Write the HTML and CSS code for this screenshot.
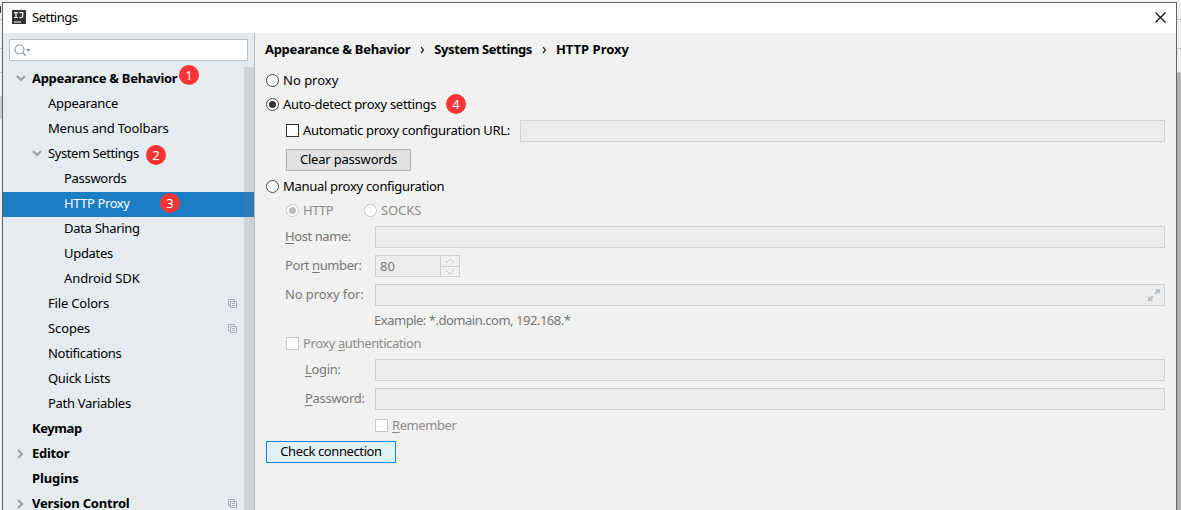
FILE: index.html
```html
<!DOCTYPE html>
<html lang="en">
<head>
<meta charset="utf-8">
<title>Settings</title>
<link rel="stylesheet" href="styles.css">
</head>
<body>
<svg class="defs" width="0" height="0">
  <symbol id="copy" viewBox="0 0 9 9"><path d="M2 6.500H.5V.5h6V2M2.500 2.500h6v6h-6zM4 4.500h3M4 6.500h3" fill="none" stroke="#a3afb8"/></symbol>
  <symbol id="down" viewBox="0 0 10 7"><path d="M1 1l4 4 4-4" fill="none" stroke="#999da0" stroke-width="2"/></symbol>
  <symbol id="right" viewBox="0 0 7 10"><path d="M1 1l4 4-4 4" fill="none" stroke="#999da0" stroke-width="2"/></symbol>
</svg>
<div class="backdrop">
  <div class="edge edge-left"><i class="e1"></i><i class="e2"></i><i class="e3"></i><i class="e4"></i><i class="e5"></i></div>
  <div class="window">
    <header class="titlebar">
      <svg class="logo" width="14" height="14" viewBox="0 0 14 14"><path fill="#343434" d="M0 0h14v14H0z"/><path d="M2 2.600h4M4 2.600v5M2 7.500h4M7.500 2.600h3.200v3.500q0 1.400-1.400 1.400H7.500M2 12h7" fill="none" stroke="#fff" stroke-width="1.200"/></svg>
      <span class="title">Settings</span>
      <svg class="close" width="11" height="11" viewBox="0 0 11 11"><path d="M.5.5l10 10M10.500.5l-10 10" stroke="#111" stroke-width="1.200"/></svg>
    </header>
    <div class="body">
      <aside class="sidebar">
        <div class="search"><svg width="18" height="13" viewBox="0 0 18 13"><circle cx="5.500" cy="5.500" r="4.500" fill="none" stroke="#8f9ba4" stroke-width="1.200"/><path d="M8.700 8.700l3 3" stroke="#8f9ba4" stroke-width="1.600"/><path d="M12 5h4.500l-2.200 3z" fill="#8f9ba4"/></svg></div>
        <div class="tree">
          <div class="item l0"><svg class="arrow" width="10" height="7"><use href="#down"/></svg><span>Appearance &amp; Behavior</span><b class="badge b1">1</b></div>
          <div class="item l1"><span>Appearance</span></div>
          <div class="item l1"><span class="t2">Menus and Toolbars</span></div>
          <div class="item l1"><svg class="arrow" width="10" height="7"><use href="#down"/></svg><span class="t4">System Settings</span><b class="badge b2">2</b></div>
          <div class="item l2"><span>Passwords</span></div>
          <div class="item l2 selected"><span class="t4">HTTP Proxy</span><b class="badge b3">3</b></div>
          <div class="item l2"><span>Data Sharing</span></div>
          <div class="item l2"><span>Updates</span></div>
          <div class="item l2"><span class="t1">Android SDK</span></div>
          <div class="item l1"><span class="t2">File Colors</span><svg class="copy" width="9" height="9"><use href="#copy"/></svg></div>
          <div class="item l1"><span class="t1">Scopes</span><svg class="copy" width="9" height="9"><use href="#copy"/></svg></div>
          <div class="item l1"><span>Notifications</span></div>
          <div class="item l1"><span>Quick Lists</span></div>
          <div class="item l1"><span>Path Variables</span></div>
          <div class="item l0"><span class="t4">Keymap</span></div>
          <div class="item l0"><svg class="arrow closed" width="7" height="10"><use href="#right"/></svg><span>Editor</span></div>
          <div class="item l0"><span class="t1">Plugins</span></div>
          <div class="item l0 last"><svg class="arrow closed" width="7" height="10"><use href="#right"/></svg><span class="t2">Version Control</span><svg class="copy" width="9" height="9"><use href="#copy"/></svg></div>
          <div class="scrollbar"></div>
        </div>
      </aside>
      <main class="panel">
        <div class="row crumbs"><span>Appearance &amp; Behavior</span><svg width="5" height="8" viewBox="0 0 5 8"><path d="M1 1l2.500 3L1 7" fill="none" stroke="#222" stroke-width="1.200"/></svg><span class="t4">System Settings</span><svg width="5" height="8" viewBox="0 0 5 8"><path d="M1 1l2.500 3L1 7" fill="none" stroke="#222" stroke-width="1.200"/></svg><span class="t0">HTTP Proxy</span></div>
        <div class="row g9"><i class="radio"></i><span class="t0">No proxy</span></div>
        <div class="row g2"><i class="radio on"></i><span>Auto-detect proxy settings</span><b class="badge b4">4</b></div>
        <div class="row g4 in1"><i class="check"></i><span class="url">Automatic proxy configuration URL:</span><div class="field"></div></div>
        <div class="row g7 in1"><div class="button clear">Clear passwords</div></div>
        <div class="row g5"><i class="radio"></i><span>Manual proxy configuration</span></div>
        <div class="row g2 in1 off"><i class="radio on"></i><span class="http">HTTP</span><i class="radio"></i><span class="t1">SOCKS</span></div>
        <div class="row g4 in1 dim"><span class="label t4"><u>H</u>ost name:</span><div class="field"></div></div>
        <div class="row g7 in1 dim"><span class="label t4">Port <u>n</u>umber:</span><div class="spinner"><span class="t0">80</span><div class="steps"><svg width="18" height="10" viewBox="0 0 18 10"><path d="M5 7l4-4 4 4" fill="none" stroke="#c4c4c4"/></svg><svg width="18" height="9" viewBox="0 0 18 9"><path d="M5 3l4 4 4-4" fill="none" stroke="#c4c4c4"/></svg></div></div></div>
        <div class="row g7 in1 dim"><span class="label t1">No proxy for:</span><div class="field expand"><svg width="12" height="12" viewBox="0 0 12 12"><path d="M7 0h5v5l-1.700-1.700L8 5.500 6.500 4l2.200-2.300zM5 12H0V7l1.700 1.700L4 6.500 5.500 8l-2.200 2.300z" fill="#b6bec4"/></svg></div></div>
        <div class="row g4 example"><span>Example: *.domain.com, 192.168.*</span></div>
        <div class="row g1 in1 off"><i class="check"></i><span class="t4">Proxy <u>a</u>uthentication</span></div>
        <div class="row g4 in2 dim"><span class="label"><u>L</u>ogin:</span><div class="field"></div></div>
        <div class="row g7 in2 dim"><span class="label"><u>P</u>assword:</span><div class="field"></div></div>
        <div class="row g5 in3 off"><i class="check"></i><span class="t4"><u>R</u>emember</span></div>
        <div class="row g4"><div class="button primary">Check connection</div></div>
      </main>
    </div>
  </div>
  <div class="edge edge-right"><i class="e1"></i><i class="e2"></i><i class="e3"></i><i class="e6"></i></div>
</div>
</body>
</html>
```

FILE: styles.css
```css
* { box-sizing: border-box; }
body { margin: 0; height: 510px; overflow: hidden; background: #f0f0f0; color: #000; font: 13px/22px "Noto Sans", "Open Sans", sans-serif; letter-spacing: -.3px; }
i, b { font-style: normal; }
.defs { position: absolute; }
.backdrop { display: grid; grid-template-columns: 2px 1175px 4px; height: 510px; padding-top: 2px; }
.edge { display: flex; flex-direction: column; overflow: hidden; }
.edge i { flex: none; border-bottom: 1px solid #c8c8c8; }
.e1 { height: 18px; }
.edge-left .e1 { background: linear-gradient(#333, #333) 0 4px / 1px 7px no-repeat; }
.e2 { height: 29px; }
.e3 { height: 24px; }
.e4 { height: 24px; }
.edge .e5 { height: 22px; background: #ccc; border: 0; }
.edge .e6 { height: 440px; background: #b3b3b3; border: 0; }
.window { display: flex; flex-direction: column; height: 520px; background: #f1f1f1; border: 1px solid #626262; }
.titlebar { display: flex; align-items: center; flex: none; height: 30px; padding: 0 10px 0 9px; background: #fff; }
.logo { margin-bottom: 2px; }
.title { margin-left: 6px; padding-bottom: 2px; letter-spacing: -.5px; }
.close { margin-left: auto; margin-bottom: 2px; }
.body { display: flex; flex: 1; }
.sidebar { width: 252px; padding-top: 6px; background: #e5ebef; border-right: 1px solid #b9bcbe; }
.search { display: flex; align-items: center; width: 239px; height: 22px; margin: 0 0 6px 6px; padding-left: 4px; background: #fff; border: 1px solid #bdbdbd; }
.tree { position: relative; }
.item { position: relative; display: flex; align-items: center; height: 25px; padding-right: 17px; white-space: nowrap; }
.item span { line-height: 20px; padding-bottom: 4px; }
.last { height: 21px; margin-top: 1px; }
.last span { padding-bottom: 2px; line-height: 18px; }
.item .copy { margin-bottom: 2px; margin-left: auto; }
.last .copy { margin-bottom: 0; }
.l0 { padding-left: 29px; font-weight: 700; }
.l1 { padding-left: 45px; }
.l2 { padding-left: 61px; }
.selected { background: #1b7dc4; color: #fff; }
.arrow { width: 10px; margin: 0 6px 2px -16px; }
.arrow.closed { width: 7px; margin: 0 8px 2px -15px; }
.last .arrow.closed { margin-bottom: 0; }
.scrollbar { position: absolute; top: 0; right: 0; width: 10px; height: 450px; background: rgba(115, 115, 125, .2); }
.badge { position: absolute; z-index: 1; width: 20px; height: 20px; border-radius: 50%; background: #fa3434; color: #fff; font: 13px/20px "Noto Sans", sans-serif; text-align: center; letter-spacing: 0; }
.b1 { left: 176px; top: -2px; }
.b2 { left: 143px; top: 3px; }
.b3 { left: 157px; top: 1px; }
.b4 { left: 180px; top: 0; }
.panel { flex: 1; padding: 6px 11px 0; }
.row { position: relative; display: flex; align-items: center; height: 22px; white-space: nowrap; }
.row > span { padding-bottom: 2px; }
.t0 { letter-spacing: 0; }
.t1 { letter-spacing: -.1px; }
.t2 { letter-spacing: -.18px; }
.t4 { letter-spacing: -.42px; }
.crumbs { margin-left: -1px; font-weight: 700; }
.crumbs svg { margin: 0 9px 1px 10px; }
.g1 { margin-top: 1px; }
.g2 { margin-top: 2px; }
.g4 { margin-top: 4px; }
.g5 { margin-top: 5px; }
.g7 { margin-top: 7px; }
.g9 { margin-top: 9px; }
.in1 { padding-left: 20px; }
.dim.in1 { padding-left: 19px; }
.in2 { padding-left: 39px; }
.in3 { padding-left: 109px; }
.radio { display: grid; place-items: center; width: 13px; height: 13px; margin: 0 4px 1px 0; background: #fff; border: 1px solid #444; border-radius: 50%; }
.radio.on::after { content: ""; width: 7px; height: 7px; border-radius: 50%; background: #333; }
.check { width: 13px; height: 13px; margin: 0 4px 1px 0; background: #fff; border: 1px solid #333; }
.off { color: #8c8c8c; }
.off .radio, .off .check { border-color: #c5c5c5; }
.off .radio.on::after { background: #bbb; }
.dim, .example { color: #777; }
.url { width: 217px; }
.http { width: 61px; letter-spacing: -.5px; }
.label { width: 90px; }
.in2 .label { width: 70px; }
.field { flex: 1; height: 22px; background: #ececec; border: 1px solid #cfcfcf; }
.expand { display: flex; align-items: center; justify-content: flex-end; padding-right: 4px; }
.button { height: 22px; border: 1px solid #adadad; background: #e1e1e1; text-align: center; line-height: 19px; }
.clear { width: 125px; letter-spacing: -.2px; }
.primary { width: 130px; border-color: #0f83da; background: #e3f1fa; letter-spacing: -.4px; }
.spinner { display: flex; justify-content: space-between; width: 85px; height: 22px; padding-left: 4px; background: #ececec; border: 1px solid #cfcfcf; line-height: 20px; }
.steps { width: 19px; border-left: 1px solid #cfcfcf; background: #f0f0f0; }
.steps svg { display: block; }
.steps svg:first-child { height: 11px; border-bottom: 1px solid #cfcfcf; }
.example { padding-left: 108px; letter-spacing: -.48px; }
u { text-underline-offset: 2px; }
```
